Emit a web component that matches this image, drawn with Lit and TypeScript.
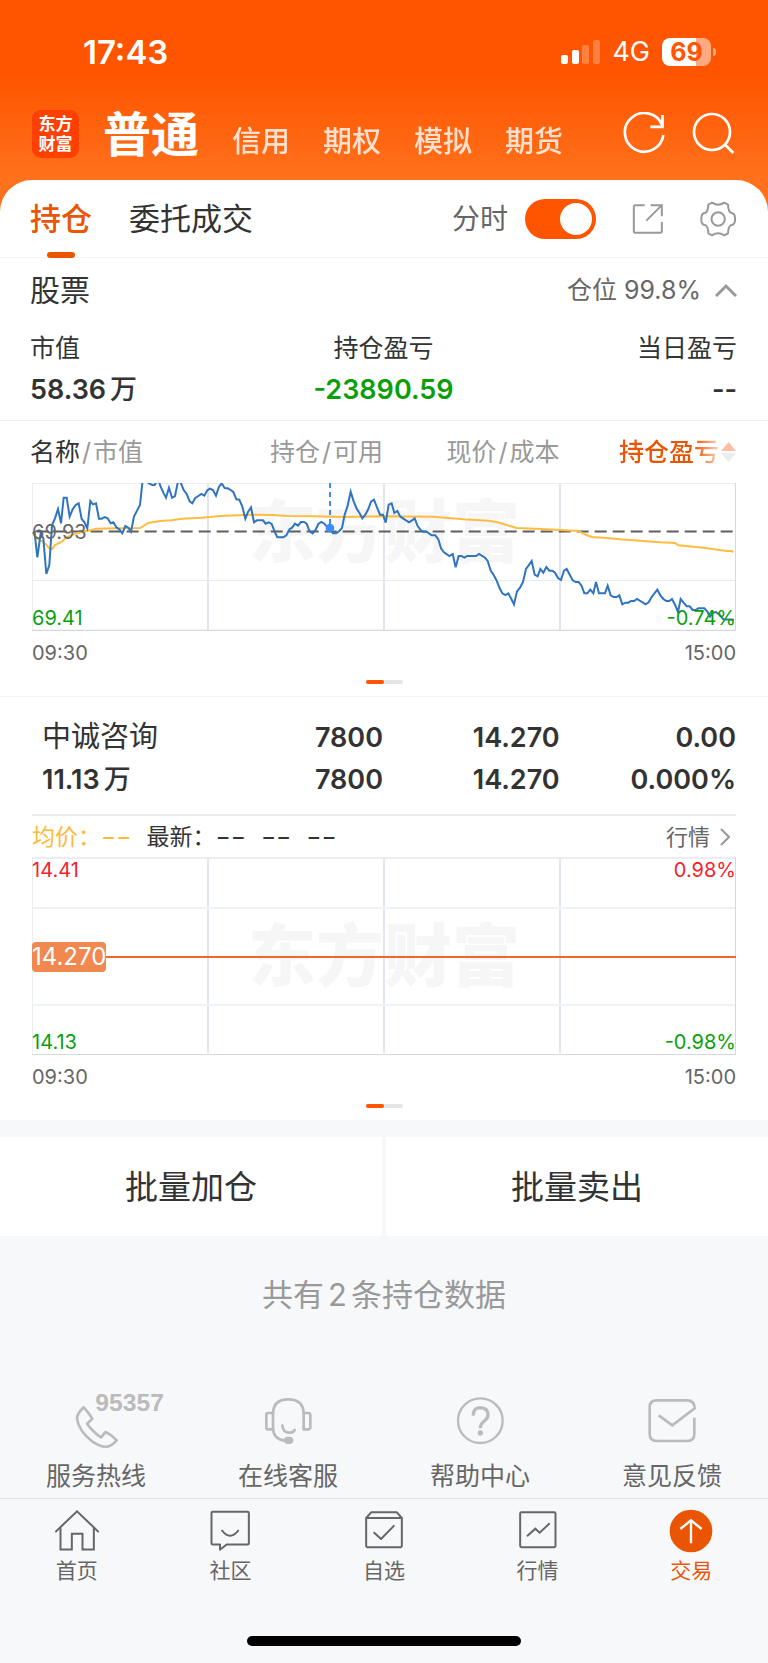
import { LitElement, html, css, svg } from "lit";
import { customElement, property, state } from "lit/decorators.js";

const PRICE_LINE =
  "38,187 44,190 52,262 62,190 70,205 79,312 88,285 96,165 105,145 114,117 123,160 131,83 140,83 149,140 158,118 167,105 176,100 185,147 193,156 202,175 211,93 219,103 228,100 237,146 245,146 254,141 263,145 272,160 280,157 289,172 298,178 307,190 316,168 325,173 333,185 342,140 351,122 360,105 368,30 380,34 388,41 397,45 404,45 410,34 418,38 421,48 430,68 438,83 447,53 456,83 465,78 474,34 482,38 491,60 500,72 509,94 517,100 526,84 535,78 544,72 553,77 562,61 570,56 579,60 588,77 597,50 605,40 614,54 623,55 632,60 640,66 649,88 658,89 667,110 676,146 684,126 693,112 702,157 711,151 729,151 737,161 746,157 755,162 764,185 772,202 790,202 799,196 808,178 816,173 825,161 834,167 843,156 852,156 860,161 869,184 878,190 887,179 895,162 904,156 913,161 922,172 930,178 939,190 948,190 957,184 966,174 974,134 983,107 992,65 1001,94 1010,116 1018,128 1027,145 1036,134 1045,117 1053,95 1062,89 1071,112 1080,134 1089,134 1097,158 1106,104 1115,100 1123,129 1132,123 1141,140 1150,146 1167,157 1176,151 1184,145 1193,168 1202,180 1210,185 1220,185 1235,196 1246,196 1255,208 1263,235 1272,247 1288,258 1298,252 1307,292 1316,258 1324,258 1333,263 1342,258 1368,258 1377,252 1395,263 1403,273 1412,302 1421,315 1430,332 1439,355 1447,370 1456,375 1465,370 1474,387 1482,403 1491,364 1500,353 1509,336 1518,297 1526,286 1535,273 1544,314 1553,319 1561,297 1570,308 1579,291 1588,302 1597,302 1605,308 1614,324 1623,330 1632,302 1640,297 1658,331 1667,336 1676,336 1685,348 1693,370 1702,370 1711,359 1720,370 1728,336 1737,370 1755,370 1763,347 1772,376 1781,381 1790,381 1798,376 1807,403 1816,398 1825,398 1833,393 1842,393 1851,387 1877,403 1886,397 1895,381 1912,359 1921,376 1930,387 1939,393 1948,393 1956,387 1965,404 1974,426 1982,387 2000,409 2009,409 2018,420 2027,420 2035,415 2053,415 2062,425 2070,440 2079,428 2088,426 2100,436 2110,448 2142,449";

const AVERAGE_LINE =
  "38,190 60,212 70,215 90,237 97,237 105,225 125,215 140,202 160,193 185,186 230,176 290,175 360,174 385,159 420,153 455,151 485,146 545,143 600,138 690,134 760,135 800,138 880,139 980,141 1080,139 1240,140 1330,148 1405,152 1430,156 1490,174 1580,178 1675,183 1700,195 1715,201 1760,204 1800,208 1920,217 1965,219 1975,226 2050,233 2120,243 2135,243 2140,247";

const icons = {
  refresh: svg`<svg class="icon44" viewBox="714 336 132 132" fill="none" stroke="#fff" stroke-width="8"><path d="M835 377A58 58 0 1 0 838 405"/><path d="M835.500 345V380.500H799"/></svg>`,
  search: svg`<svg class="icon44" viewBox="921 336 132 132" fill="none" stroke="#fff" stroke-width="8"><circle cx="984" cy="396" r="54"/><path d="M1021 432L1048 459"/></svg>`,
  share: svg`<svg class="icon36" viewBox="738 602 108 108" fill="none" stroke="#999" stroke-width="6"><path d="M782 614.500H754Q749.500 614.500 749.500 619V693Q749.500 697.500 754 697.500H829Q833.500 697.500 833.500 693V665"/><path d="M800 614.500H833.500V648M832 616L787 661"/></svg>`,
  gear: svg`<svg class="icon36" viewBox="949 603 108 108" fill="none" stroke="#999" stroke-width="6" stroke-linejoin="round"><path d="M985 608Q1003 620 1022 608L1033 614Q1034 634 1041 638Q1055 639 1054 657Q1055 675 1041 676Q1034 680 1033 700L1022 706Q1003 694 985 706L974 700Q973 680 966 676Q952 675 953 657Q952 639 966 638Q973 634 974 614Z"/><circle cx="1003.500" cy="657" r="20"/></svg>`,
  phone: svg`<svg class="phone" viewBox="66 72 444 162" fill="none" stroke="#bbb" stroke-width="8" stroke-linejoin="round"><path d="M251 112Q231 131 231 146Q236 182 276 214Q306 233 322 230Q336 227 350 211Q336 195 317 186L303 202Q279 186 261 161L277 146Q264 125 251 112Z"/><text class="hotline" x="286" y="123">95357</text></svg>`,
  headset: svg`<svg class="icon54" viewBox="783 72 162 162" fill="none" stroke="#bbb" stroke-width="8" stroke-linecap="round" stroke-linejoin="round"><path d="M819 180V132Q819 88 865 88Q911 88 911 132V178"/><path d="M819 129H803Q799 129 799 134V173Q799 178 803 178H819M911 129H925Q931 129 931 135V172Q931 178 925 178H911"/><path d="M819 178Q822 208 855 212M847 166Q849 187 867 188Q879 189 884 180"/><rect x="856" y="204" width="20" height="14" rx="7" fill="#bbb"/></svg>`,
  help: svg`<svg class="icon54" viewBox="207 72 162 162" fill="none" stroke="#bbb" stroke-width="7"><circle cx="289" cy="152" r="67"/><path stroke-width="10" d="M268 137Q267 113 289 113Q312 114 312 134Q312 144 301 153Q289 162 289 175"/><circle cx="289" cy="189" r="8" fill="#bbb" stroke="none"/></svg>`,
  mail: svg`<svg class="icon54" viewBox="783 72 162 162" fill="none" stroke="#bbb" stroke-width="8"><path d="M931 143V192Q931 213 910 213H818Q797 213 797 192V112Q797 91 818 91H908Q932 91 932 115L865 166L824 136"/></svg>`,
  home: svg`<svg class="icon44" viewBox="165 417 132 132" fill="none" stroke="#666" stroke-width="6"><path d="M166 486L231 424L296 486"/><path d="M181.500 473V538.500H215.500V491.500H247.500V538.500H281.500V473"/></svg>`,
  community: svg`<svg class="icon44" viewBox="625 417 132 132" fill="none" stroke="#666" stroke-width="6" stroke-linejoin="round"><path d="M639 425.500H744Q747.500 425.500 747.500 429V520Q747.500 523.500 744 523.500H681L661 539V523.500H639Q635.500 523.500 635.500 520V429Q635.500 425.500 639 425.500Z"/><path d="M666 480Q691 515 717 480"/></svg>`,
  favorites: svg`<svg class="icon44" viewBox="1086 417 132 132" fill="none" stroke="#666" stroke-width="6" stroke-linejoin="round"><path d="M1098.500 444L1114 426.500H1190L1205.500 444V528Q1205.500 531.500 1202 531.500H1102Q1098.500 531.500 1098.500 528ZM1098.500 444H1205.500"/><path d="M1121 487L1143 507L1183 466"/></svg>`,
  market: svg`<svg class="icon44" viewBox="395 417 132 132" fill="none" stroke="#666" stroke-width="6"><rect x="407.500" y="426.500" width="106" height="105" rx="4"/><path d="M428 499L453 476L466 488L496 460"/></svg>`,
  trade: svg`<svg class="icon44" viewBox="857 415 132 132" fill="none" stroke="#fff" stroke-width="7"><circle cx="923" cy="481" r="64" fill="#ea5504" stroke="none"/><path d="M891 475L923 449L955 475M923 449V518"/></svg>`,
};

@customElement("app-pager")
class AppPager extends LitElement {
  static styles = css`
    :host { display: flex; justify-content: center; padding: 5px 0 12px; }
    .track { width: 37px; height: 4px; border-radius: 2px; background: #e5e5e5; }
    .thumb { width: 18px; height: 4px; border-radius: 2px; background: #ff5500; }
  `;
  render() {
    return html`<div class="track"><div class="thumb"></div></div>`;
  }
}

@customElement("trend-chart")
class TrendChart extends LitElement {
  @property({ type: Boolean }) index = false;

  static styles = css`
    :host { display: block; margin: 0 32px; }
    .plot { position: relative; height: 148px; display: flex; align-items: center; justify-content: center; overflow: hidden; }
    .plot.tall { height: 198px; }
    .plot.top { align-items: flex-start; }
    .mark { font-size: 68px; line-height: 98px; font-weight: 900; color: #f6f6f7; }
    .lines { position: absolute; inset: 0; width: 100%; height: 100%; }
    .lines * { vector-effect: non-scaling-stroke; }
    .label { position: absolute; font-size: 20px; line-height: 20px; color: #666; }
    .left { left: 0; }
    .right { right: 0; }
    .up { top: 3px; }
    .down { bottom: 3px; }
    .mid { top: 39px; }
    .red { color: #f5222d; }
    .green { color: #0a9f0a; }
    .tag { position: absolute; left: 0; top: 85px; border-radius: 4px; background: #f08850; color: #fff; font-size: 24px; line-height: 30px; }
    .axis { display: flex; justify-content: space-between; font-size: 20px; line-height: 44px; color: #666; }
  `;

  render() {
    return html`
      ${this.index
        ? html`<div class="plot top">
            <span class="mark">东方财富</span>
            <svg class="lines" viewBox="36 39 2112 444" preserveAspectRatio="none" fill="none">
              <path stroke="#e3e6ee" stroke-width="2" d="M564 39V480M1092 39V480M1620 39V480"/>
              <path stroke="#e6e9f0" stroke-width="1" d="M36 331H2148"/>
              <path stroke="#ebedf2" stroke-width="2" d="M36 39V483M36 39H2148"/>
              <path stroke="#d5d8de" stroke-width="2" d="M36 482H2148V39"/>
              <path stroke="#5f5f5f" stroke-width="2" stroke-dasharray="12 6" d="M50 184.500H2145"/>
              <polyline stroke="#ffbc40" stroke-width="2" points=${AVERAGE_LINE}/>
              <polyline stroke="#2f74c0" stroke-width="2" points=${PRICE_LINE}/>
              <path stroke="#3d8bff" stroke-width="2" stroke-dasharray="5 4" d="M930 39V174"/>
              <circle cx="930" cy="174" r="13" fill="#3d8bff"/>
            </svg>
            <span class="label left mid">69.93</span>
            <span class="label left down green">69.41</span>
            <span class="label right down green">-0.74%</span>
          </div>`
        : html`<div class="plot tall">
            <span class="mark">东方财富</span>
            <svg class="lines" viewBox="0 0 704 198" preserveAspectRatio="none" fill="none">
              <path stroke="#e3e6ee" stroke-width="2" d="M176 2V196M352 2V196M528 2V196"/>
              <path stroke="#eef1f6" stroke-width="2" d="M0 51H704M0 148H704"/>
              <path stroke="#ebedf2" stroke-width="2" d="M0 0V198M0 1H704"/>
              <path stroke="#d5d8de" stroke-width="2" d="M0 198H704V0"/>
              <path stroke="#f0682a" stroke-width="2" d="M0 100H704"/>
            </svg>
            <span class="label left up red">14.41</span>
            <span class="label right up red">0.98%</span>
            <span class="label left down green">14.13</span>
            <span class="label right down green">-0.98%</span>
            <span class="tag">14.270</span>
          </div>`}
      <div class="axis"><span>09:30</span><span>15:00</span></div>
    `;
  }
}

@customElement("app-root")
class AppRoot extends LitElement {
  @state() private intraday = true;

  static styles = css`
    * { box-sizing: border-box; }
    :host {
      display: block;
      min-height: 100vh;
      font-family: "Inter", "Noto Sans CJK SC", sans-serif;
      color: #333;
      background: #f7f8fa;
    }
    button { font: inherit; color: inherit; background: none; border: 0; padding: 0; margin: 0; cursor: pointer; }
    a { color: inherit; text-decoration: none; }
    h2 { margin: 0; font-size: 30px; line-height: 40px; font-weight: 400; }
    svg { display: block; flex: none; }
    .icon36 { width: 36px; height: 36px; }
    .icon44 { width: 44px; height: 44px; }
    .icon54 { width: 54px; height: 54px; }

    .top { background: linear-gradient(#ff5500 0, #ff5500 75px, #ff711c 180px); padding-bottom: 70px; }
    .status { display: flex; align-items: center; height: 103px; padding: 0 52px 0 83px; color: #fff; }
    .time { flex: 1; font-size: 33px; line-height: 40px; font-weight: 600; }
    .signal { width: 39px; height: 24px; margin-right: 12px; }
    .network { font-size: 27px; line-height: 32px; font-weight: 400; margin-right: 12px; }
    .battery { width: 49px; height: 28px; border-radius: 8px; background: linear-gradient(90deg, #fff 70%, #ffaa80 70%); color: #ff5500; font-size: 25px; line-height: 28px; font-weight: 700; text-align: center; }
    .nub { width: 3px; height: 8px; margin-left: 2px; border-radius: 0 3px 3px 0; background: #ffaa80; }

    .nav { display: flex; align-items: center; height: 62px; padding: 0 33px 0 32px; color: #fff; }
    .logo { width: 47px; height: 48px; padding: 4px 0; border-radius: 9px; background: #ff4000; font-size: 17px; line-height: 20px; font-weight: 700; text-align: center; }
    .accounts { flex: 1; display: flex; align-items: center; gap: 33px; margin-left: 24px; }
    .accounts button { padding-top: 16px; font-size: 29px; line-height: 40px; font-weight: 500; opacity: 0.8; }
    .accounts .current { padding-top: 2px; font-size: 48px; line-height: 60px; font-weight: 700; opacity: 1; }
    .tools { display: flex; gap: 25px; }

    .card { position: relative; margin-top: -55px; border-radius: 32px 32px 0 0; background: #fff; }
    .tabs { display: flex; align-items: center; height: 78px; padding: 0 32px 0 30px; border-bottom: 1px solid #f3f4f6; }
    .tab { font-size: 31px; line-height: 78px; margin-right: 37px; }
    .tab.on { position: relative; color: #ea5504; font-weight: 500; }
    .tab.on::after { content: ""; position: absolute; left: 17px; right: 17px; bottom: 0; height: 6px; border-radius: 3px; background: #ea5504; }
    .actions { margin-left: auto; display: flex; align-items: center; gap: 34px; }
    .toggle { display: flex; align-items: center; gap: 17px; font-size: 28px; line-height: 40px; color: #666; }
    .toggle input { appearance: none; width: 71px; height: 40px; margin: 0; padding: 4px; border-radius: 20px; background: #ccc; display: flex; }
    .toggle input::before { content: ""; width: 32px; height: 32px; border-radius: 16px; background: #fff; }
    .toggle input:checked { background: #ff5500; justify-content: flex-end; }

    .summary { border-bottom: 1px solid #f0f1f3; padding: 0 31px 10px 30px; }
    .headline { display: flex; align-items: center; justify-content: space-between; height: 64px; }
    .position { display: flex; align-items: center; gap: 14px; font-size: 25px; line-height: 40px; color: #666; }
    .chevron { width: 22px; height: 14px; }
    .metrics { display: flex; justify-content: space-between; margin: 8px 0 0; text-align: center; }
    .metrics div:first-child { text-align: left; flex: 1; }
    .metrics div:last-child { text-align: right; flex: 1; }
    .metrics dt { font-size: 25px; line-height: 36px; }
    .metrics dd { margin: 4px 0 0; font-size: 27px; line-height: 40px; font-weight: 600; }
    .metrics .loss { color: #0a9f0a; }
    .unit { font-weight: 500; margin-left: 4px; }

    table { width: 100%; border-collapse: collapse; table-layout: fixed; }
    .c1 { width: 27%; }
    .c2 { width: 23%; }
    th, td { padding: 0 1px 0 0; text-align: right; white-space: nowrap; }
    th { height: 62px; font-size: 25px; line-height: 36px; font-weight: 400; color: #999; }
    th:first-child { padding-left: 30px; text-align: left; }
    th:last-child, .figures td:last-child { padding-right: 32px; }
    .dark { color: #333; }
    .slash { margin: 0 2px; }
    .sort { display: inline-flex; align-items: center; gap: 2px; color: #ea5504; font-weight: 500; vertical-align: top; }
    .sort .fade { background: linear-gradient(90deg, #ea5504 75%, #fbd3bd); background-clip: text; -webkit-background-clip: text; color: transparent; }
    .arrows { width: 15px; height: 20px; }
    .figures td { font-size: 27px; line-height: 42px; font-weight: 600; padding-top: 19px; padding-bottom: 13px; }
    .figures td:first-child { padding-left: 42px; text-align: left; }
    .stock { font-size: 29px; font-weight: 400; }
    .wide { padding: 0; text-align: left; }
    .divided { border-bottom: 1px solid #f3f4f6; }
    .quote { display: flex; align-items: center; margin: 0 32px; height: 43px; border-top: 2px solid #ececee; font-size: 23px; line-height: 40px; }
    .average { color: #ffb938; margin-right: 15px; }
    .dash { margin-right: 15px; }
    .more { margin-left: auto; margin-right: 6px; display: flex; align-items: center; gap: 10px; font-size: 22px; color: #666; }
    .more svg { width: 10px; height: 18px; }

    .batch { display: grid; grid-template-columns: 1fr 1fr; gap: 4px; margin-top: 17px; }
    .batch button { height: 99px; background: #fff; font-size: 33px; line-height: 40px; }
    .count { margin: 0; text-align: center; font-size: 31px; line-height: 118px; color: #999; }
    .number { margin: 0 4px; }
    .services { display: grid; grid-template-columns: repeat(4, 1fr); padding: 40px 0 4px; color: #666; font-size: 25px; line-height: 36px; }
    .services a { display: flex; flex-direction: column; align-items: center; gap: 10px; }
    .phone { width: 148px; height: 54px; }
    .hotline { font-family: "Liberation Sans", sans-serif; font-weight: 700; font-size: 74px; fill: #bbb; stroke: none; }
    .bar { display: grid; grid-template-columns: repeat(5, 1fr); padding-top: 10px; border-top: 1px solid #e2e3e6; color: #666; font-size: 21px; line-height: 30px; }
    .bar a { display: flex; flex-direction: column; align-items: center; gap: 3px; }
    .bar .here { color: #ea5504; }
    .indicator { width: 274px; height: 10px; margin: 50px auto 0; border-radius: 5px; background: #000; }
    .end { padding-bottom: 17px; }
  `;

  render() {
    return html`
      <header class="top">
        <div class="status">
          <span class="time">17:43</span>
          <svg class="signal" viewBox="0 0 39 24" fill="#fff">
            <rect y="15" width="7" height="9" rx="2"/>
            <rect x="11" y="10" width="7" height="14" rx="2"/>
            <g opacity=".25"><rect x="21" y="5" width="7" height="19" rx="2"/><rect x="32" width="7" height="24" rx="2"/></g>
          </svg>
          <span class="network">4G</span>
          <span class="battery">69</span><span class="nub"></span>
        </div>
        <nav class="nav">
          <div class="logo">东方<br>财富</div>
          <div class="accounts">
            <button class="current">普通</button>
            <button>信用</button><button>期权</button><button>模拟</button><button>期货</button>
          </div>
          <div class="tools">
            <button aria-label="刷新">${icons.refresh}</button>
            <button aria-label="搜索">${icons.search}</button>
          </div>
        </nav>
      </header>

      <main>
        <div class="card">
          <div class="tabs">
            <button class="tab on">持仓</button>
            <button class="tab">委托成交</button>
            <div class="actions">
              <label class="toggle">分时<input type="checkbox" .checked=${this.intraday}
                @change=${(e: Event) => (this.intraday = (e.target as HTMLInputElement).checked)}></label>
              <button aria-label="分享">${icons.share}</button>
              <button aria-label="设置">${icons.gear}</button>
            </div>
          </div>

          <section class="summary">
            <div class="headline">
              <h2>股票</h2>
              <button class="position">仓位 99.8%
                <svg class="chevron" viewBox="0 0 22 14" fill="none" stroke="#999" stroke-width="3"><path d="M1 13L11 3L21 13"/></svg>
              </button>
            </div>
            <dl class="metrics">
              <div><dt>市值</dt><dd>58.36<span class="unit">万</span></dd></div>
              <div><dt>持仓盈亏</dt><dd class="loss">-23890.59</dd></div>
              <div><dt>当日盈亏</dt><dd>--</dd></div>
            </dl>
          </section>

          <table>
            <colgroup><col class="c1"><col class="c2"><col class="c2"><col class="c1"></colgroup>
            <thead>
              <tr>
                <th><span class="dark">名称</span><span class="slash">/</span>市值</th>
                <th>持仓<span class="slash">/</span>可用</th>
                <th>现价<span class="slash">/</span>成本</th>
                <th><button class="sort"><span class="fade">持仓盈亏</span>
                  <svg class="arrows" viewBox="0 0 15 20"><path d="M7.500 0L15 9H0Z" fill="#f9c0a4"/><path d="M7.500 20L15 11H0Z" fill="#ececee"/></svg></button></th>
              </tr>
            </thead>
            <tbody>
              <tr><td class="wide divided" colspan="4"><trend-chart index></trend-chart><app-pager></app-pager></td></tr>
              <tr class="figures">
                <td><span class="stock">中诚咨询</span><br>11.13<span class="unit">万</span></td>
                <td>7800<br>7800</td>
                <td>14.270<br>14.270</td>
                <td>0.00<br>0.000%</td>
              </tr>
              <tr><td class="wide" colspan="4">
                <div class="quote">
                  <span class="average">均价：−−</span>
                  <span class="dash">最新：−−</span><span class="dash">−−</span><span class="dash">−−</span>
                  <a class="more" href="#">行情<svg viewBox="0 0 10 18" fill="none" stroke="#999" stroke-width="2"><path d="M1 1L9 9L1 17"/></svg></a>
                </div>
                <trend-chart></trend-chart><app-pager></app-pager>
              </td></tr>
            </tbody>
          </table>
        </div>

        <div class="batch"><button>批量加仓</button><button>批量卖出</button></div>
        <p class="count">共有<span class="number">2</span>条持仓数据</p>
        <div class="services">
          <a href="#">${icons.phone}服务热线</a>
          <a href="#">${icons.headset}在线客服</a>
          <a href="#">${icons.help}帮助中心</a>
          <a href="#">${icons.mail}意见反馈</a>
        </div>
      </main>

      <footer class="end">
        <nav class="bar">
          <a href="#">${icons.home}首页</a>
          <a href="#">${icons.community}社区</a>
          <a href="#">${icons.favorites}自选</a>
          <a href="#">${icons.market}行情</a>
          <a class="here" href="#">${icons.trade}交易</a>
        </nav>
        <div class="indicator"></div>
      </footer>
    `;
  }
}
